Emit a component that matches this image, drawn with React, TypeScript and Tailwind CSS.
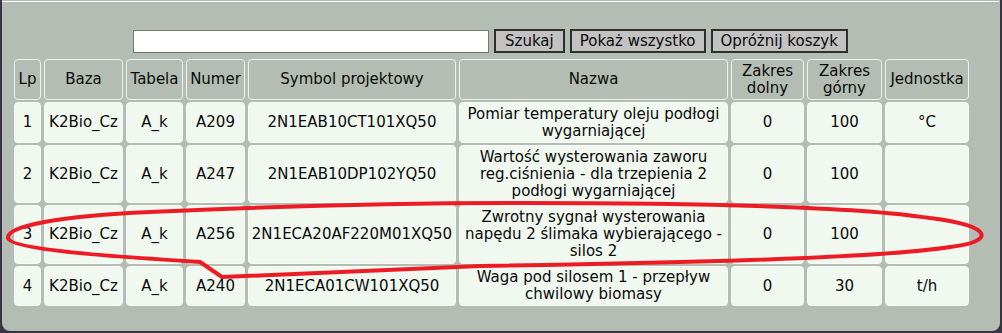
import React from "react";

const font = { fontFamily: '"DejaVu Sans", Verdana, sans-serif' };

type Row = {
  lp: string;
  baza: string;
  tabela: string;
  numer: string;
  symbol: string;
  nazwa: string[];
  zd: string;
  zg: string;
  jed: string;
};

const rows: Row[] = [
  { lp: "1", baza: "K2Bio_Cz", tabela: "A_k", numer: "A209", symbol: "2N1EAB10CT101XQ50", nazwa: ["Pomiar temperatury oleju podłogi", "wygarniającej"], zd: "0", zg: "100", jed: "°C" },
  { lp: "2", baza: "K2Bio_Cz", tabela: "A_k", numer: "A247", symbol: "2N1EAB10DP102YQ50", nazwa: ["Wartość wysterowania zaworu", "reg.ciśnienia - dla trzepienia 2", "podłogi wygarniającej"], zd: "0", zg: "100", jed: "" },
  { lp: "3", baza: "K2Bio_Cz", tabela: "A_k", numer: "A256", symbol: "2N1ECA20AF220M01XQ50", nazwa: ["Zwrotny sygnał wysterowania", "napędu 2 ślimaka wybierającego -", "silos 2"], zd: "0", zg: "100", jed: "" },
  { lp: "4", baza: "K2Bio_Cz", tabela: "A_k", numer: "A240", symbol: "2N1ECA01CW101XQ50", nazwa: ["Waga pod silosem 1 - przepływ", "chwilowy biomasy"], zd: "0", zg: "30", jed: "t/h" },
];

function Head({ children }: { children: React.ReactNode }) {
  return (
    <div className="flex items-center justify-center text-center rounded-[4px] border border-[#eef2ee] bg-[#b3bdb3] text-[#0a0a0a] whitespace-nowrap">
      <div>{children}</div>
    </div>
  );
}

function Cell({ children }: { children: React.ReactNode }) {
  return (
    <div className="flex items-center justify-center text-center rounded-[4px] border border-[#f6fcf6] bg-[#f0f8f0] text-[#0a0a0a] whitespace-nowrap">
      <div>{children}</div>
    </div>
  );
}

export default function App() {
  return (
    <div className="relative w-[1002px] h-[333px] bg-[#3a3346] overflow-hidden" style={font}>
      <div className="ml-[2px] w-[998px] h-[331px] bg-[#b3bdb3] rounded-b-[8px] flex flex-col text-[15px] leading-[17px]">
        <div className="h-px" />
        <div className="h-px bg-white mr-[1px]" />
        <div className="flex items-center gap-[5px] pl-[131px] mt-[27px] h-[24px]">
          <input className="w-[356px] h-[23px] bg-white border border-[#767676] outline-none" />
          <button className="h-[24px] px-[9px] border-2 border-[#2e2e2e] bg-[#c2c2c2] text-[#0a0a0a] leading-[18px]">Szukaj</button>
          <button className="h-[24px] px-[8px] border-2 border-[#2e2e2e] bg-[#c2c2c2] text-[#0a0a0a] leading-[18px]">Pokaż wszystko</button>
          <button className="h-[24px] px-[8px] border-2 border-[#2e2e2e] bg-[#c2c2c2] text-[#0a0a0a] leading-[18px]">Opróżnij koszyk</button>
        </div>
        <div className="pl-[12px] mt-[6px]">
          <div className="grid grid-cols-[27px_79px_57px_59px_208px_269px_73px_75px_84px] grid-rows-[41px_41px_58px_59px_40px] gap-x-[3px] gap-y-[2px]">
            <Head>Lp</Head>
            <Head>Baza</Head>
            <Head>Tabela</Head>
            <Head>Numer</Head>
            <Head>Symbol projektowy</Head>
            <Head>Nazwa</Head>
            <Head>Zakres<br />dolny</Head>
            <Head>Zakres<br />górny</Head>
            <Head>Jednostka</Head>
            {rows.map((r) => (
              <React.Fragment key={r.lp}>
                <Cell>{r.lp}</Cell>
                <Cell>{r.baza}</Cell>
                <Cell>{r.tabela}</Cell>
                <Cell>{r.numer}</Cell>
                <Cell>{r.symbol}</Cell>
                <Cell>
                  {r.nazwa.map((l, i) => (
                    <div key={i}>{l}</div>
                  ))}
                </Cell>
                <Cell>{r.zd}</Cell>
                <Cell>{r.zg}</Cell>
                <Cell>{r.jed}</Cell>
              </React.Fragment>
            ))}
          </div>
        </div>
      </div>
      <svg className="absolute left-0 top-0 pointer-events-none" width="1002" height="333" viewBox="0 0 1002 333">
        <path
          d="M 200 262 C 120 257, 10 250, 8 238 C 6 226, 60 216, 150 212 C 260 207, 400 203, 520 203 C 700 203, 860 207, 930 218 C 995 226, 995 242, 950 247 C 880 258, 700 263, 480 266 L 222 277 L 200 262 Z"
          fill="none"
          stroke="#ed1c24"
          strokeWidth="4"
          strokeLinejoin="round"
        />
      </svg>
    </div>
  );
}
